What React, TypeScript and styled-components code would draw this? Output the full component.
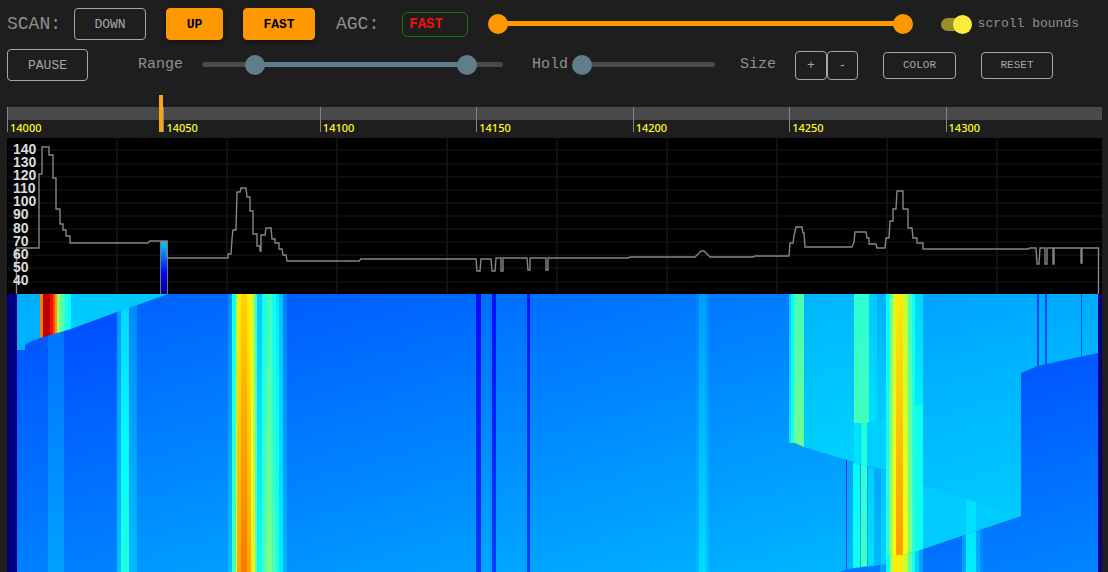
import React, { useState } from "react";
import styled, { createGlobalStyle } from "styled-components";

const GlobalStyle = createGlobalStyle`
  *, *::before, *::after { box-sizing: border-box; }
  body {
    margin: 0;
    background: #1e1e1e;
    color: #8f8f8f;
    font-family: "Liberation Mono", "Courier New", monospace;
  }
`;

const Page = styled.main`
  padding: 8px 6px 0 7px;
`;

const Toolbar = styled.div<{ $end: number }>`
  display: flex;
  align-items: center;
  height: 32px;
  padding-right: ${(p) => p.$end}px;
`;

const Caption = styled.span`
  font-size: 18px;
  line-height: 24px;
  white-space: nowrap;
`;

const FieldLabel = styled.span<{ $left?: number }>`
  margin-left: ${(p) => p.$left ?? 0}px;
  font-size: 15px;
  line-height: 20px;
  white-space: nowrap;
`;

const Button = styled.button<{ $active?: boolean; $width: number; $height?: number; $size?: number }>`
  flex: none;
  width: ${(p) => p.$width}px;
  height: ${(p) => p.$height ?? 32}px;
  padding: 0;
  border: 1px solid ${(p) => (p.$active ? "#ff9800" : "#a6a6a6")};
  border-radius: 4px;
  background: ${(p) => (p.$active ? "#ff9800" : "transparent")};
  color: ${(p) => (p.$active ? "#000" : "#a6a6a6")};
  box-shadow: ${(p) => (p.$active ? "0 2px 4px rgba(0, 0, 0, 0.4)" : "none")};
  font-family: inherit;
  font-size: ${(p) => p.$size ?? 13}px;
  font-weight: ${(p) => (p.$active ? 700 : 400)};
  cursor: pointer;
`;

const ScanButtons = styled.div`
  display: flex;
  gap: 20px;
  margin: 0 21px 0 13px;
`;

const SizeButtons = styled.div`
  display: flex;
  margin: 0 25px 0 19px;
`;

const ActionButtons = styled.div`
  display: flex;
  gap: 25px;
`;

const AgcSelect = styled.select`
  flex: none;
  appearance: none;
  width: 66px;
  height: 25px;
  margin: 0 30px 0 23px;
  padding: 0 6px;
  border: 1px solid #0a7d0a;
  border-radius: 6px;
  background: transparent;
  color: #f01010;
  font-family: inherit;
  font-size: 14px;
  font-weight: 700;
`;

const SliderBox = styled.div<{ $grow: number; $left?: number; $right: number }>`
  position: relative;
  flex: ${(p) => p.$grow} 1 0;
  height: 20px;
  margin: 0 ${(p) => p.$right}px 0 ${(p) => p.$left ?? 0}px;
`;

const Track = styled.div`
  height: 5px;
  margin: 7px 0 8px;
  border-radius: 3px;
  background: #4a4a4a;
`;

const Fill = styled.div<{ $color: string }>`
  height: 5px;
  background: ${(p) => p.$color};
`;

const Thumb = styled.input<{ $color: string }>`
  appearance: none;
  position: absolute;
  top: 0;
  left: -10px;
  width: calc(100% + 20px);
  height: 20px;
  margin: 0;
  background: transparent;
  pointer-events: none;
  &::-webkit-slider-thumb {
    appearance: none;
    width: 20px;
    height: 20px;
    border-radius: 50%;
    background: ${(p) => p.$color};
    pointer-events: auto;
    cursor: pointer;
  }
`;

type SliderProps = {
  labels: string[];
  initial: number[];
  color: string;
  grow: number;
  left?: number;
  right: number;
};

function Slider({ labels, initial, color, grow, left, right }: SliderProps) {
  const [values, setValues] = useState(initial);
  const low = values.length > 1 ? Math.min(...values) : 0;
  const high = Math.max(...values);
  return (
    <SliderBox $grow={grow} $left={left} $right={right}>
      <Track>
        <Fill $color={color} style={{ marginLeft: `${low}%`, width: `${high - low}%` }} />
      </Track>
      {values.map((value, i) => (
        <Thumb
          key={labels[i]}
          type="range"
          aria-label={labels[i]}
          min={0}
          max={100}
          step={0.5}
          value={value}
          $color={color}
          onChange={(e) => setValues(values.map((v, n) => (n === i ? Number(e.target.value) : v)))}
        />
      ))}
    </SliderBox>
  );
}

const SwitchLabel = styled.label`
  display: flex;
  align-items: center;
  gap: 7px;
  font-size: 13px;
  line-height: 20px;
  white-space: nowrap;
`;

const Switch = styled.input`
  appearance: none;
  position: relative;
  width: 30px;
  height: 13px;
  margin: 0;
  border-radius: 7px;
  background: #555;
  cursor: pointer;
  &::after {
    content: "";
    position: absolute;
    top: -3px;
    left: 0;
    width: 19px;
    height: 19px;
    border-radius: 50%;
    background: #bbb;
  }
  &:checked { background: #998e2e; }
  &:checked::after { left: 12px; background: #ffeb3b; }
`;

const Controls = styled.div`
  display: grid;
  gap: 9px;
`;

const Ruler = styled.div`
  position: relative;
  display: grid;
  grid-template-columns: repeat(7, 1fr);
  height: 25px;
  margin: 26px 0 6px;
  background: linear-gradient(#4a4a4a, #4a4a4a) top / 100% 13px no-repeat;
`;

const Tick = styled.div`
  height: 25px;
  padding: 14px 0 0 2px;
  border-left: 1px solid #858585;
  color: #ffff1a;
  font-family: "Noto Sans", sans-serif;
  font-size: 11px;
  font-weight: 500;
  line-height: 14px;
`;

const Marker = styled.div`
  position: absolute;
  top: -12px;
  bottom: 0;
  width: 4px;
  background: #f9a516;
`;

const Spectrum = styled.section`
  position: relative;
  background: #000;
`;

const Levels = styled.div`
  position: absolute;
  top: 5px;
  left: 6px;
  height: 144px;
  display: flex;
  flex-direction: column;
  justify-content: space-between;
  color: #dcdcdc;
  font-family: "Liberation Sans", Arial, sans-serif;
  font-size: 14px;
  font-weight: 700;
  line-height: 13px;
`;

const Plot = styled.svg`
  display: block;
  width: 100%;
`;

/* Jet palette over 0..1020: navy, blue, cyan, yellow, red, maroon. */
const clamp = (n: number) => Math.round(Math.max(0, Math.min(255, n)));
const jet = (v: number) => {
  const r = v < 892 ? v - 382 : 255 - (v - 892);
  const g = v < 637 ? v - 127 : 892 - v;
  const b = v < 382 ? v + 128 : 637 - v;
  return `rgb(${clamp(r)},${clamp(g)},${clamp(b)})`;
};

const TOP = 294;
const BOTTOM = 572;
const SLANT = 0.29;
const REACH = 600;

/* [left, right, level at the top, rise from top to bottom] */
type Strip = [number, number, number, number];

function Strips({ id, items, top = TOP, clip }: { id: string; items: Strip[]; top?: number; clip?: string }) {
  const len = REACH / (1 + SLANT * SLANT);
  return (
    <g clipPath={clip ? `url(#${clip})` : undefined}>
      {items.map(([x0, x1, level, rise], i) => (
        <React.Fragment key={i}>
          <linearGradient
            id={`${id}${i}`}
            gradientUnits="userSpaceOnUse"
            x1={x0}
            y1={TOP}
            x2={x0 + SLANT * len}
            y2={TOP + len}
          >
            {Array.from({ length: 25 }, (_, n) => (
              <stop key={n} offset={n / 24} stopColor={jet(level + (rise * REACH * n) / 24 / (BOTTOM - TOP))} />
            ))}
          </linearGradient>
          <rect x={x0} y={top} width={x1 - x0} height={BOTTOM - top} fill={`url(#${id}${i})`} />
        </React.Fragment>
      ))}
    </g>
  );
}

const base: Strip[] = [
  [7, 17, 0, 0],
  [17, 48, 205, 50],
  [48, 64, 236, 52],
  [64, 117, 200, 55],
  [117, 121, 275, 50],
  [121, 129, 340, 75],
  [129, 137, 262, 54],
  [137, 228, 224, 56],
  [228, 232, 265, 56],
  [232, 236, 400, 60],
  [236, 237, 520, 60],
  [237, 241, 652, 76],
  [241, 247, 682, 90],
  [247, 251, 648, 78],
  [251, 253, 600, 60],
  [253, 255, 535, 65],
  [255, 257, 435, 60],
  [257, 262, 325, 60],
  [262, 266, 395, 62],
  [266, 272, 440, 66],
  [272, 276, 396, 66],
  [276, 279, 360, 50],
  [279, 283, 318, 50],
  [283, 287, 255, 50],
  [287, 476, 219, 56],
  [476, 481, 140, 45],
  [481, 492, 236, 56],
  [492, 496, 140, 45],
  [496, 527, 237, 56],
  [527, 530, 145, 40],
  [530, 696, 236, 56],
  [696, 699, 257, 58],
  [699, 706, 284, 62],
  [706, 709, 263, 56],
  [709, 1098, 246, 56],
];

const scanned: Strip[] = [
  [17, 40, 300, 20],
  [40, 43, 765, 20],
  [43, 50, 960, 20],
  [50, 53, 880, 20],
  [53, 55, 815, 20],
  [55, 57, 740, 20],
  [57, 60, 530, 20],
  [60, 64, 470, 20],
  [64, 67, 425, 20],
  [67, 71, 385, 20],
  [71, 168, 325, 35],
];

const upper: Strip[] = [
  [789, 791, 330, 50],
  [791, 794, 378, 50],
  [794, 804, 454, 68],
  [804, 854, 308, 45],
  [854, 869, 425, 50],
  [869, 877, 328, 50],
  [877, 886, 302, 62],
  [886, 890, 385, 50],
  [890, 893, 500, 60],
  [893, 896, 590, 50],
  [896, 903, 655, 85],
  [903, 908, 575, 50],
  [908, 912, 450, 75],
  [912, 915, 395, 40],
  [915, 923, 340, 60],
  [923, 1098, 290, 45],
  [1037, 1039, 195, 40],
  [1045, 1047, 195, 40],
  [1081, 1082, 195, 40],
];

const lower: Strip[] = [
  [838, 854, 224, 20],
  [854, 880, 226, 20],
  [880, 886, 245, 40],
  [886, 890, 340, 50],
  [890, 893, 500, 50],
  [893, 903, 600, 50],
  [903, 908, 520, 60],
  [908, 912, 415, 60],
  [912, 915, 350, 60],
  [915, 919, 290, 50],
  [919, 923, 240, 50],
  [923, 962, 188, 56],
  [962, 966, 240, 50],
  [966, 976, 325, 40],
  [976, 980, 260, 40],
  [980, 983, 225, 45],
  [983, 1021, 198, 56],
  [1021, 1098, 198, 58],
];

const columns: Strip[] = [
  [853, 860, 340, 60],
  [860, 861, 250, 40],
  [861, 867, 385, 66],
  [867, 868, 250, 40],
  [868, 874, 302, 50],
  [874, 881, 266, 46],
  [881, 886, 290, 50],
];

const trace =
  "M16.5 294V248H39V174H42V147H49V155H53V178H56V209H60V224H63V230H66V236H70V243H148L150 241H167V258H228V254H231L232 239L233 230H236L237 192H240L241 188H246L247 197H250V211H253V234H257V246H260V251H261V235H265L266 228H271L272 239H275V243H279V249H282L283 255H286L287 261H359L361 259H476L477 271H480L481 259H491L492 271H495L496 258H501V271H503V258H527L528 270H530V258H546V270H548V258H628L630 257H695L699 253L701 251H704L706 253L710 257H753L755 256H789L790 243H793L794 236L796 227H802L803 233H804L805 247H852L854 242L855 232H866L867 238H869V244H876L877 248H885L886 238H889L890 221H893V209H896L897 191H903V209H908V228H912L913 238H917V243H923V249H1028L1030 248H1036L1037 264H1039L1040 248H1045V264H1047V248H1053V264H1054V248H1081V263H1082V248H1098.5V294";

function Waterfall() {
  return (
    <Plot height={278} viewBox="7 294 1095 278" preserveAspectRatio="none" role="img" aria-label="Waterfall">
      <clipPath id="scannedArea">
        <path d="M17 294H168L160 297L117 312L71 329L40 338L32 341L25 345V350H17Z" />
      </clipPath>
      <clipPath id="upperArea">
        <path d="M789 294H1098V353L1036 366L1021 373V516L923 549L903 555V572H886V470L847 460L804 447L795 443H789Z" />
      </clipPath>
      <clipPath id="lowerArea">
        <path d="M1098 353L1047 364L1036 366L1034 368L1021 373V516L983 528L923 549L903 555H886V562L875 566L854 568L838 572H1098Z" />
      </clipPath>
      <clipPath id="columnArea">
        <path d="M853 463L886 471V564L868 566L853 568Z" />
      </clipPath>
      <Strips id="base" items={base} />
      <Strips id="edge" items={[[846, 847, 160, 45]]} top={459} />
      <Strips id="scanned" items={scanned} clip="scannedArea" />
      <Strips id="upper" items={upper} clip="upperArea" />
      <Strips id="lower" items={lower} clip="lowerArea" />
      <Strips id="column" items={columns} clip="columnArea" />
      <path d="M854 423H867L877 419H886V470L853 462Z" fill="#00d0ff" />
      <rect x="854" y="423" width="6" height="41" fill="#00e4ff" />
      <rect x="861" y="423" width="6" height="43" fill="#20ffdc" />
      <path d="M915 406L923 403V549L915 551Z" fill="#10ffec" />
      <path d="M923 486L1021 516L923 549Z" fill="#00ccff" />
      <path d="M966 499L976 502V530L966 534Z" fill="#00e0ff" />
      <path d="M893 555H903V572H893Z" fill="#ffee00" />
      <rect x="1098" y="294" width="4" height="278" fill="#000084" />
    </Plot>
  );
}

const gridRows = [150, 164, 177, 190, 203, 216, 229, 242, 255, 268, 282];
const gridColumns = [117, 227, 337, 447, 557, 667, 777, 887, 997];
const levels = [140, 130, 120, 110, 100, 90, 80, 70, 60, 50, 40];
const frequencies = [14000, 14050, 14100, 14150, 14200, 14250, 14300];

export default function App() {
  const [direction, setDirection] = useState("up");
  const [fast, setFast] = useState(true);
  return (
    <Page>
      <GlobalStyle />
      <Controls>
        <Toolbar $end={23}>
          <Caption>SCAN:</Caption>
          <ScanButtons>
            <Button $width={72} $active={direction === "down"} onClick={() => setDirection("down")}>DOWN</Button>
            <Button $width={57} $active={direction === "up"} onClick={() => setDirection("up")}>UP</Button>
            <Button $width={72} $active={fast} onClick={() => setFast(!fast)}>FAST</Button>
          </ScanButtons>
          <Caption as="label" htmlFor="agc">AGC:</Caption>
          <AgcSelect id="agc" defaultValue="FAST">
            <option>FAST</option>
            <option>SLOW</option>
          </AgcSelect>
          <Slider labels={["Scroll start", "Scroll end"]} initial={[0, 100]} color="#ff9800" grow={405} right={38} />
          <SwitchLabel>
            <Switch type="checkbox" defaultChecked />
            scroll bounds
          </SwitchLabel>
        </Toolbar>
        <Toolbar $end={49}>
          <Button $width={81}>PAUSE</Button>
          <FieldLabel $left={50}>Range</FieldLabel>
          <Slider labels={["Range low", "Range high"]} initial={[17.5, 88]} color="#607d8b" grow={301} left={19} right={29} />
          <FieldLabel>Hold</FieldLabel>
          <Slider labels={["Hold"]} initial={[0]} color="#607d8b" grow={133} left={14} right={25} />
          <FieldLabel>Size</FieldLabel>
          <SizeButtons>
            <Button $width={32} $height={29}>+</Button>
            <Button $width={31} $height={29}>-</Button>
          </SizeButtons>
          <ActionButtons>
            <Button $width={73} $height={27} $size={11}>COLOR</Button>
            <Button $width={72} $height={27} $size={11}>RESET</Button>
          </ActionButtons>
        </Toolbar>
      </Controls>
      <Ruler>
        {frequencies.map((f) => (
          <Tick key={f}>{f}</Tick>
        ))}
        <Marker style={{ left: "13.9%" }} />
      </Ruler>
      <Spectrum>
        <Plot height={156} viewBox="7 138 1095 156" preserveAspectRatio="none" role="img" aria-label="Spectrum">
          <linearGradient id="bar" x1="0" y1="0" x2="0" y2="1">
            <stop offset="0" stopColor="#00ccff" />
            <stop offset="0.6" stopColor="#0000ff" />
            <stop offset="1" stopColor="#000080" />
          </linearGradient>
          {gridRows.map((y) => (
            <rect key={y} x="7" y={y - 1} width="1095" height="2" fill="#0d0d0d" />
          ))}
          {gridColumns.map((x) => (
            <rect key={x} x={x - 1} y="138" width="2" height="156" fill="#101010" />
          ))}
          <rect x="160.5" y="241.5" width="7" height="54" fill="url(#bar)" stroke="#777" />
          <path d={trace} fill="none" stroke="#858585" strokeWidth="1.4" />
        </Plot>
        <Levels>
          {levels.map((n) => (
            <span key={n}>{n}</span>
          ))}
        </Levels>
      </Spectrum>
      <Waterfall />
    </Page>
  );
}
